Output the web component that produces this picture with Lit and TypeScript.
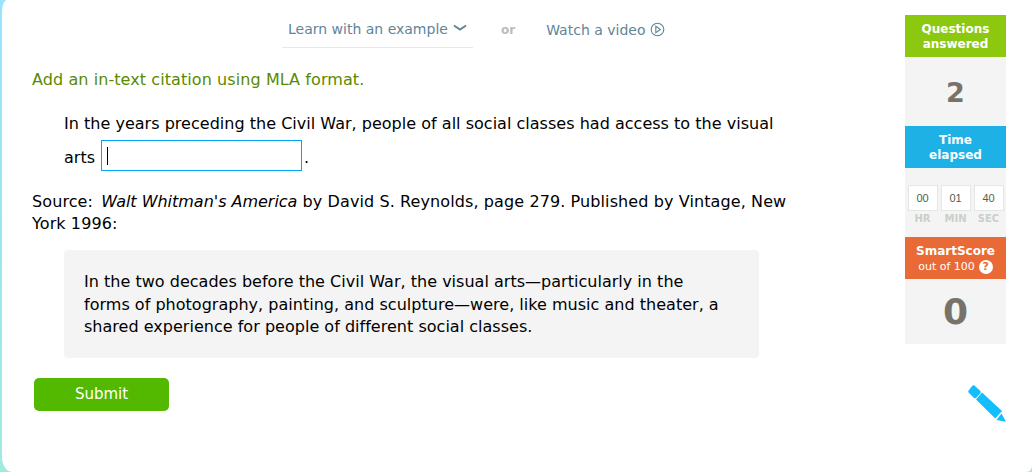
import { LitElement, html, css } from "lit";
import { customElement } from "lit/decorators.js";

@customElement("app-root")
export class AppRoot extends LitElement {
  static styles = css`
    :host {
      display: block;
      width: 1032px;
      height: 472px;
      font-family: "DejaVu Sans", sans-serif;
      background: linear-gradient(170deg, #9be2ff 0%, #a0ecd4 100%);
      overflow: hidden;
    }
    .sheet {
      box-sizing: border-box;
      height: 472px;
      margin-left: 2px;
      background: #fff;
      border-top-left-radius: 5px 12px;
      border-bottom-left-radius: 10px 15px;
      border-bottom-right-radius: 6px;
      display: flex;
      position: relative;
    }
    .main {
      width: 903px;
      flex: none;
      box-sizing: border-box;
      padding-left: 30px;
    }
    .helpers {
      height: 47px;
      display: flex;
      align-items: flex-start;
      margin-left: 250px;
      color: #5f8597;
      font-size: 14px;
    }
    .learn {
      box-sizing: border-box;
      width: 191px;
      height: 33px;
      margin-top: 15px;
      border-bottom: 1px solid #e8e8e8;
      padding: 6px 0 0 6px;
      display: flex;
      align-items: flex-start;
      line-height: 17px;
      white-space: nowrap;
    }
    .chev { margin: 3px 0 0 5px; }
    .or {
      margin: 23px 0 0 28px;
      font-size: 12px;
      font-weight: bold;
      color: #bbb;
      line-height: 15px;
    }
    .watch {
      margin: 22px 0 0 31px;
      line-height: 17px;
      display: flex;
      white-space: nowrap;
    }
    .watch svg { margin: 0 0 0 5px; }
    .prompt {
      margin-top: 24px;
      color: #5a8a00;
      font-size: 16px;
      letter-spacing: 0.08px;
      line-height: 18px;
    }
    .sentence {
      margin: 26px 0 0 32px;
      width: 730px;
      color: #000;
      font-size: 16px;
      letter-spacing: 0.02px;
      line-height: 18px;
    }
    .arts {
      display: flex;
      align-items: flex-start;
      margin-top: 7px;
      height: 32px;
    }
    .arts .lbl { margin: 9px 0 0 0; }
    .box {
      box-sizing: border-box;
      width: 201px;
      height: 31px;
      margin-left: 6px;
      border: 1px solid #00a5f5;
      padding: 6px 0 0 5px;
    }
    .caret { width: 1px; height: 18px; background: #000; }
    .arts .dot { margin: 9px 0 0 2px; }
    .source {
      margin-top: 19px;
      width: 770px;
      color: #000;
      font-size: 16px;
      letter-spacing: 0.1px;
      line-height: 22px;
    }
    .source i { margin-left: 3px; letter-spacing: -0.02px; }
    .quote {
      box-sizing: border-box;
      width: 695px;
      height: 108px;
      margin: 15px 0 0 32px;
      padding: 21px 30px 20px 20px;
      background: #f4f4f4;
      border-radius: 4px;
      color: #000;
      font-size: 16px;
      letter-spacing: 0.02px;
      line-height: 22.5px;
    }
    .submit {
      display: block;
      box-sizing: border-box;
      width: 135px;
      height: 33px;
      margin: 20px 0 0 2px;
      border: 0;
      padding: 0 0 1px;
      border-radius: 5px;
      background: #52b800;
      color: #fff;
      font: 15px/29px "DejaVu Sans", sans-serif;
    }
    .side {
      width: 101px;
      flex: none;
      margin-top: 15px;
      height: 329px;
      background: #f4f4f4;
      text-align: center;
    }
    .head {
      height: 42px;
      box-sizing: border-box;
      padding-top: 7px;
      color: #fff;
      font-size: 12px;
      font-weight: bold;
      line-height: 15px;
    }
    .green { background: #8cc80f; }
    .blue { background: #1eb1e6; }
    .orange { background: #e96a36; }
    .sub {
      display: flex;
      justify-content: center;
      align-items: center;
      gap: 4px;
      font-size: 11px;
      font-weight: normal;
    }
    .q {
      width: 14px;
      height: 14px;
      border-radius: 50%;
      background: #fff;
      color: #e96a36;
      font-size: 11px;
      font-weight: bold;
      line-height: 14px;
    }
    .count {
      height: 69px;
      font-size: 27px;
      font-weight: bold;
      color: #77736a;
      line-height: 71px;
    }
    .timer {
      height: 69px;
      box-sizing: border-box;
      padding-top: 17px;
      display: grid;
      grid-template-columns: repeat(3, 30px);
      grid-template-rows: 26px auto;
      column-gap: 3px;
      justify-content: center;
    }
    .cell {
      box-sizing: border-box;
      height: 26px;
      background: #fff;
      border: 1px solid #e6e6e6;
      font-family: "Liberation Sans", sans-serif;
      font-size: 11px;
      line-height: 24px;
      color: #4f5f4f;
    }
    .unit {
      font-size: 10px;
      font-weight: bold;
      color: #c9cfc9;
      line-height: 14px;
      margin-top: 1px;
    }
    .score { font-size: 36px; line-height: 66px; height: 65px; }
    .pencil { position: absolute; left: 948px; top: 370px; }
  `;

  render() {
    return html`
      <div class="sheet">
        <div class="main">
          <div class="helpers">
            <div class="learn">
              Learn with an example
              <svg class="chev" width="14" height="8" viewBox="0 0 14 8">
                <path d="M1 1.5 L7 5.5 L13 1.5" fill="none" stroke="#5f8597" stroke-width="2" />
              </svg>
            </div>
            <div class="or">or</div>
            <div class="watch">
              Watch a video
              <svg width="15" height="15" viewBox="0 0 15 15">
                <circle cx="7.5" cy="7.5" r="6.3" fill="none" stroke="#5f8597" stroke-width="1.1" />
                <path d="M5.8 4.3 L10.4 7.5 L5.8 10.7 Z" fill="none" stroke="#5f8597" stroke-width="1.1" />
              </svg>
            </div>
          </div>
          <div class="prompt">Add an in-text citation using MLA format.</div>
          <div class="sentence">
            In the years preceding the Civil War, people of all social classes had access to the visual
            <div class="arts">
              <span class="lbl">arts</span>
              <div class="box"><div class="caret"></div></div>
              <span class="dot">.</span>
            </div>
          </div>
          <div class="source">
            Source: <i>Walt Whitman's America</i> by David S. Reynolds, page 279. Published by Vintage, New York 1996:
          </div>
          <div class="quote">
            In the two decades before the Civil War, the visual arts—particularly in the forms of photography,
            painting, and sculpture—were, like music and theater, a shared experience for people of different
            social classes.
          </div>
          <button class="submit">Submit</button>
        </div>
        <div class="side">
          <div class="head green">Questions<br />answered</div>
          <div class="count">2</div>
          <div class="head blue">Time<br />elapsed</div>
          <div class="timer">
            <div class="cell">00</div>
            <div class="cell">01</div>
            <div class="cell">40</div>
            <div class="unit">HR</div>
            <div class="unit">MIN</div>
            <div class="unit">SEC</div>
          </div>
          <div class="head orange">
            SmartScore
            <div class="sub">out of 100 <span class="q">?</span></div>
          </div>
          <div class="count score">0</div>
        </div>
        <svg class="pencil" width="60" height="60" viewBox="0 0 60 60">
          <path d="M23.5 17 L29 22 L25 26.5 L20 21.5 Z" fill="#14bdfb" stroke="#14bdfb" stroke-width="3.5" stroke-linejoin="round" />
          <path d="M32 22.5 L52 41 L45.3 48.5 L26 29.5 Z" fill="#14bdfb" />
          <path d="M51.5 43.5 L56 51.7 L46.5 50 Z" fill="#14bdfb" />
        </svg>
      </div>
    `;
  }
}
